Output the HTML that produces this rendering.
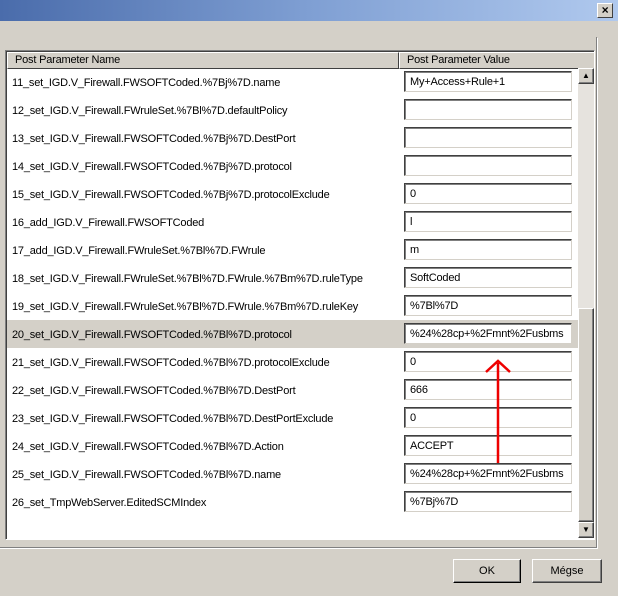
<!DOCTYPE html>
<html><head><style>
body{margin:0;width:618px;height:596px;background:#d4d0c8;position:relative;overflow:hidden;font-family:"Liberation Sans",Tahoma,sans-serif;font-size:11px;color:#000;letter-spacing:-0.2px}
.abs{position:absolute}
.title{left:0;top:0;width:618px;height:21px;background:linear-gradient(90deg,#4a6cab 0%,#7f9fd3 50%,#b0c9ee 100%)}
.close{left:597px;top:3px;width:14px;height:13px;background:#d4d0c8;border:1px solid;border-color:#fff #404040 #404040 #fff;font-size:12px;line-height:12px;text-align:center;font-weight:bold}
.frame{left:-2px;top:37px;width:598px;height:510px;border-right:1px solid #808080;border-bottom:1px solid #808080;box-shadow:1px 1px 0 #fff}
.list{left:5px;top:50px;width:588px;height:488px;background:#fff;border:1px solid;border-color:#808080 #fff #fff #808080;box-shadow:inset 1px 1px 0 #404040;overflow:hidden}
.hdr{top:1px;background:#d4d0c8;border:1px solid;border-color:#fff #404040 #404040 #fff;line-height:15px;box-sizing:border-box;height:17px}
.row{left:1px;width:570px;height:28px;line-height:28px}
.row span{position:absolute;left:5px;top:1px}
.inp{position:absolute;left:397px;top:3px;width:168px;height:21px;box-sizing:border-box;border:1px solid;border-color:#404040 #d4d0c8 #d4d0c8 #404040;box-shadow:inset 1px 1px 0 #808080;background:#fff;line-height:19px;padding:1px 0 0 5px;white-space:nowrap;overflow:hidden}
.sb{left:572px;top:17px;width:16px;height:470px;background:#e6e3de}
.btn{background:#d4d0c8;border:1px solid;border-color:#fff #404040 #404040 #fff;box-shadow:inset -1px -1px 0 #808080;box-sizing:border-box;text-align:center;letter-spacing:0}
.sel{background:#d4d0c8}
</style></head><body>
<div class="abs title"></div>
<div class="abs close">×</div>
<div class="abs frame"></div>
<div class="abs list">
<div class="abs hdr" style="left:1px;width:392px;padding-left:7px">Post Parameter Name</div>
<div class="abs hdr" style="left:393px;width:196px;padding-left:7px">Post Parameter Value</div>
<div class="abs row" style="top:17px"><span>11_set_IGD.V_Firewall.FWSOFTCoded.%7Bj%7D.name</span><div class="inp">My+Access+Rule+1</div></div>
<div class="abs row" style="top:45px"><span>12_set_IGD.V_Firewall.FWruleSet.%7Bl%7D.defaultPolicy</span><div class="inp"></div></div>
<div class="abs row" style="top:73px"><span>13_set_IGD.V_Firewall.FWSOFTCoded.%7Bj%7D.DestPort</span><div class="inp"></div></div>
<div class="abs row" style="top:101px"><span>14_set_IGD.V_Firewall.FWSOFTCoded.%7Bj%7D.protocol</span><div class="inp"></div></div>
<div class="abs row" style="top:129px"><span>15_set_IGD.V_Firewall.FWSOFTCoded.%7Bj%7D.protocolExclude</span><div class="inp">0</div></div>
<div class="abs row" style="top:157px"><span>16_add_IGD.V_Firewall.FWSOFTCoded</span><div class="inp">l</div></div>
<div class="abs row" style="top:185px"><span>17_add_IGD.V_Firewall.FWruleSet.%7Bl%7D.FWrule</span><div class="inp">m</div></div>
<div class="abs row" style="top:213px"><span>18_set_IGD.V_Firewall.FWruleSet.%7Bl%7D.FWrule.%7Bm%7D.ruleType</span><div class="inp">SoftCoded</div></div>
<div class="abs row" style="top:241px"><span>19_set_IGD.V_Firewall.FWruleSet.%7Bl%7D.FWrule.%7Bm%7D.ruleKey</span><div class="inp">%7Bl%7D</div></div>
<div class="abs row sel" style="top:269px;width:571px"><span>20_set_IGD.V_Firewall.FWSOFTCoded.%7Bl%7D.protocol</span><div class="inp">%24%28cp+%2Fmnt%2Fusbms</div></div>
<div class="abs row" style="top:297px"><span>21_set_IGD.V_Firewall.FWSOFTCoded.%7Bl%7D.protocolExclude</span><div class="inp">0</div></div>
<div class="abs row" style="top:325px"><span>22_set_IGD.V_Firewall.FWSOFTCoded.%7Bl%7D.DestPort</span><div class="inp">666</div></div>
<div class="abs row" style="top:353px"><span>23_set_IGD.V_Firewall.FWSOFTCoded.%7Bl%7D.DestPortExclude</span><div class="inp">0</div></div>
<div class="abs row" style="top:381px"><span>24_set_IGD.V_Firewall.FWSOFTCoded.%7Bl%7D.Action</span><div class="inp">ACCEPT</div></div>
<div class="abs row" style="top:409px"><span>25_set_IGD.V_Firewall.FWSOFTCoded.%7Bl%7D.name</span><div class="inp">%24%28cp+%2Fmnt%2Fusbms</div></div>
<div class="abs row" style="top:437px"><span>26_set_TmpWebServer.EditedSCMIndex</span><div class="inp">%7Bj%7D</div></div>
<div class="abs sb"></div>
<div class="abs btn" style="left:572px;top:17px;width:16px;height:16px;font-size:8px;line-height:14px">▲</div>
<div class="abs btn" style="left:572px;top:257px;width:16px;height:214px"></div>
<div class="abs btn" style="left:572px;top:471px;width:16px;height:16px;font-size:8px;line-height:14px">▼</div>
</div>
<svg class="abs" style="left:480px;top:355px" width="40" height="110"><path d="M18 108V8M6 17L18 6L30 17" stroke="#e00" stroke-width="2.5" fill="none"/></svg>
<div class="abs btn" style="left:453px;top:559px;width:68px;height:24px;line-height:22px;border-color:#fff #000 #000 #fff">OK</div>
<div class="abs btn" style="left:532px;top:559px;width:70px;height:24px;line-height:22px">Mégse</div>
</body></html>
